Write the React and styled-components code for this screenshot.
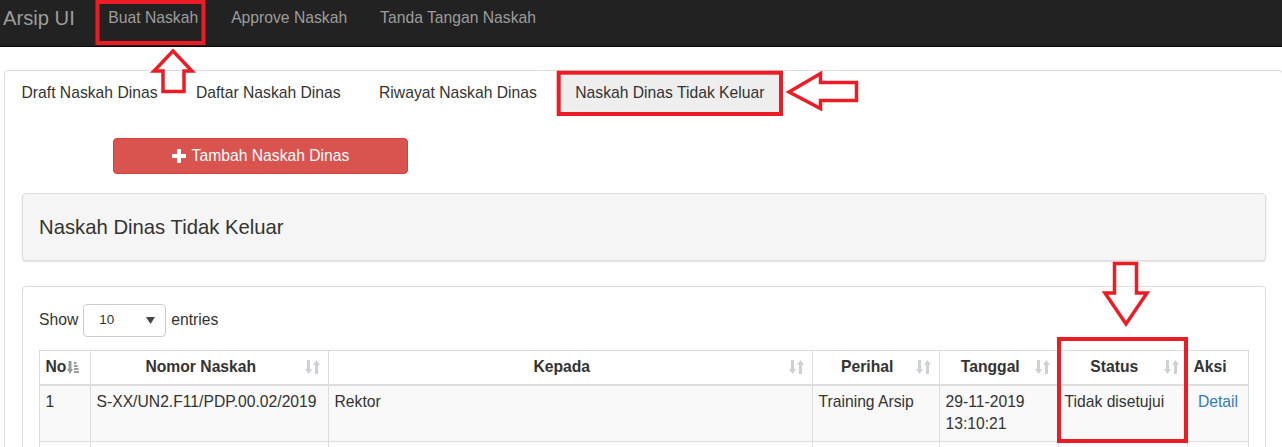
import React from "react";
import styled, { createGlobalStyle } from "styled-components";

const GlobalStyle = createGlobalStyle`
  html, body {
    margin: 0;
    padding: 0;
    overflow: hidden;
    background: #fff;
  }
  body {
    font-family: "Liberation Sans", Arial, sans-serif;
    font-size: 15.7px;
    line-height: 22px;
    color: #333;
  }
  * { box-sizing: border-box; }
`;

const Page = styled.div`
  position: relative;
  width: 1282px;
  height: 447px;
  overflow: hidden;
`;

const Navbar = styled.nav`
  display: flex;
  align-items: flex-start;
  height: 47px;
  background: #222;
  border-bottom: 1px solid #080808;
`;

const Brand = styled.div`
  padding: 7px 0 0 3px;
  margin-right: 17px;
  font-size: 20.2px;
  line-height: 22px;
  color: #9d9d9d;
`;

const NavLink = styled.a`
  padding: 7px 16.5px 0;
  font-size: 15.7px;
  line-height: 22px;
  color: #9d9d9d;
  text-decoration: none;
`;

const Main = styled.div`
  margin: 23px 0 0 4px;
  width: 1279px;
  border: 1px solid #ddd;
  border-radius: 4px 4px 0 0;
  height: 400px;
`;

const Tabs = styled.ul`
  display: flex;
  margin: 0;
  padding: 0;
  list-style: none;
`;

const Tab = styled.li`
  margin-left: ${p => (p.$first ? "0" : "5.4px")};
  padding: 11px 16.5px;
  line-height: 22px;
  border-radius: 4px;
  color: #333;
  background: ${p => (p.$active ? "#eee" : "transparent")};
`;

const Body = styled.div`
  padding: 0 16.5px 16.5px;
`;

const ButtonRow = styled.div`
  margin-top: 23px;
  padding-left: 91.5px;
`;

const DangerButton = styled.button`
  display: flex;
  align-items: center;
  justify-content: center;
  gap: 6px;
  width: 295px;
  height: 36px;
  padding: 0;
  background: #d9534f;
  border: 1px solid #d43f3a;
  border-radius: 4px;
  color: #fff;
  font-family: inherit;
  font-size: 15.7px;
`;

const HeadingPanel = styled.div`
  display: flex;
  align-items: center;
  margin-top: 19px;
  height: 68px;
  padding: 0 16.5px;
  background: #f5f5f5;
  border: 1px solid #ddd;
  border-radius: 4px;
  box-shadow: 0 1px 2px rgba(0, 0, 0, 0.12);
  font-size: 20.3px;
`;

const TablePanel = styled.div`
  margin-top: 25px;
  padding: 16.5px;
  border: 1px solid #ddd;
  border-radius: 4px;
  background: #fff;
`;

const LengthRow = styled.div`
  display: flex;
  align-items: center;
  gap: 5px;
  height: 33px;
`;

const SelectBox = styled.div`
  display: flex;
  align-items: center;
  justify-content: space-between;
  width: 83px;
  height: 33px;
  padding: 0 10px 0 15px;
  border: 1px solid #ccc;
  border-radius: 4px;
  font-size: 13.4px;
`;

const Table = styled.table`
  margin-top: 13px;
  width: 1209px;
  table-layout: fixed;
  border-collapse: collapse;
  border: 1px solid #ddd;
`;

const Th = styled.th`
  padding: 5.5px 8px 5.5px 5.5px;
  border: 1px solid #ddd;
  border-bottom-width: 2px;
  font-weight: bold;
  text-align: left;
`;

const ThInner = styled.div`
  display: flex;
  align-items: center;
`;

const ThLabel = styled.span`
  flex: ${p => (p.$center ? "1" : "0 0 auto")};
  text-align: ${p => (p.$center ? "center" : "left")};
`;

const Tr = styled.tr`
  background: ${p => (p.$striped ? "#f9f9f9" : "#fff")};
`;

const Td = styled.td`
  height: ${p => (p.$empty ? "56px" : "auto")};
  padding: 5.5px;
  border: 1px solid #ddd;
  vertical-align: top;
  text-align: ${p => p.$align || "left"};
`;

const DetailLink = styled.a`
  color: #337ab7;
  text-decoration: none;
`;

const Overlay = styled.svg`
  position: absolute;
  top: 0;
  left: 0;
  pointer-events: none;
`;

const PlusIcon = () => (
  <svg width="14" height="14" viewBox="0 0 14 14">
    <path d="M5 0h4v5h5v4H9v5H5V9H0V5h5z" fill="#fff" />
  </svg>
);

const SortIcon = () => (
  <svg width="15" height="16" viewBox="0 0 15 16">
    <g fill="#cdd1d6">
      <rect x="2" y="1" width="3" height="10" />
      <polygon points="0,10 7,10 3.5,15" />
      <polygon points="8,6 15,6 11.5,1" />
      <rect x="10" y="6" width="3" height="9" />
    </g>
  </svg>
);

const SortAscIcon = () => (
  <svg width="12" height="15" viewBox="0 0 12 15" style={{ marginLeft: 1 }}>
    <g fill="#9a9a9a">
      <rect x="1.5" y="1" width="3" height="9" />
      <polygon points="0,9 6,9 3,14" />
      <rect x="7" y="2" width="2.5" height="2" />
      <rect x="7" y="5" width="3.5" height="2" />
      <rect x="7" y="8" width="4.5" height="2" />
      <rect x="7" y="11" width="5" height="2" />
    </g>
  </svg>
);

const Caret = () => (
  <svg width="9" height="7" viewBox="0 0 9 7">
    <polygon points="0,0 9,0 4.5,7" fill="#444" />
  </svg>
);

const columns = [
  { label: "No", width: 51, sort: "asc" },
  { label: "Nomor Naskah", width: 238, sort: true },
  { label: "Kepada", width: 484, sort: true },
  { label: "Perihal", width: 127, sort: true },
  { label: "Tanggal", width: 119, sort: true },
  { label: "Status", width: 129, sort: true },
  { label: "Aksi", width: 61, sort: false },
];

const rows = [
  {
    no: 1,
    nomor: "S-XX/UN2.F11/PDP.00.02/2019",
    kepada: "Rektor",
    perihal: "Training Arsip",
    tanggal: ["29-11-2019", "13:10:21"],
    status: "Tidak disetujui",
  },
];

const RED = "#ed1c24";

const Annotations = () => (
  <Overlay width="1282" height="447">
    <g fill="none" stroke={RED} strokeWidth="3.5" strokeLinejoin="miter">
      <rect x="97.5" y="2" width="106" height="41" strokeWidth="4" />
      <polygon points="173,51 192,71 184,71 184,91.5 163,91.5 163,71 154,71" />
      <rect x="558.7" y="72.7" width="222.3" height="41.3" strokeWidth="4" />
      <polygon points="789,92 820.5,73.5 820.5,82.5 856.5,82.5 856.5,100.5 820.5,100.5 820.5,108.5" />
      <polygon points="1114.5,263.5 1136.5,263.5 1136.5,293 1147,293 1126,324 1105,293 1114.5,293" />
      <rect x="1059" y="339" width="127" height="102" strokeWidth="4" />
    </g>
  </Overlay>
);

const tabs = ["Draft Naskah Dinas", "Daftar Naskah Dinas", "Riwayat Naskah Dinas", "Naskah Dinas Tidak Keluar"];

export default function App() {
  return (
    <Page>
      <GlobalStyle />
      <Navbar>
        <Brand>Arsip UI</Brand>
        <NavLink>Buat Naskah</NavLink>
        <NavLink>Approve Naskah</NavLink>
        <NavLink>Tanda Tangan Naskah</NavLink>
      </Navbar>
      <Main>
        <Tabs>
          {tabs.map((t, i) => (
            <Tab key={t} $first={i === 0} $active={i === 3}>{t}</Tab>
          ))}
        </Tabs>
        <Body>
          <ButtonRow>
            <DangerButton>
              <PlusIcon />
              Tambah Naskah Dinas
            </DangerButton>
          </ButtonRow>
          <HeadingPanel>Naskah Dinas Tidak Keluar</HeadingPanel>
          <TablePanel>
            <LengthRow>
              Show
              <SelectBox>
                10
                <Caret />
              </SelectBox>
              entries
            </LengthRow>
            <Table>
              <colgroup>
                {columns.map(c => <col key={c.label} style={{ width: c.width }} />)}
              </colgroup>
              <thead>
                <tr>
                  {columns.map(c => (
                    <Th key={c.label}>
                      <ThInner>
                        <ThLabel $center={c.sort === true}>{c.label}</ThLabel>
                        {c.sort === true && <SortIcon />}
                        {c.sort === "asc" && <SortAscIcon />}
                      </ThInner>
                    </Th>
                  ))}
                </tr>
              </thead>
              <tbody>
                {rows.map((r, i) => (
                  <Tr key={r.no} $striped={i % 2 === 0}>
                    <Td>{r.no}</Td>
                    <Td>{r.nomor}</Td>
                    <Td>{r.kepada}</Td>
                    <Td>{r.perihal}</Td>
                    <Td>{r.tanggal[0]}<br />{r.tanggal[1]}</Td>
                    <Td>{r.status}</Td>
                    <Td $align="center"><DetailLink href="#">Detail</DetailLink></Td>
                  </Tr>
                ))}
                <Tr>
                  {columns.map(c => <Td key={c.label} $empty />)}
                </Tr>
              </tbody>
            </Table>
          </TablePanel>
        </Body>
      </Main>
      <Annotations />
    </Page>
  );
}
